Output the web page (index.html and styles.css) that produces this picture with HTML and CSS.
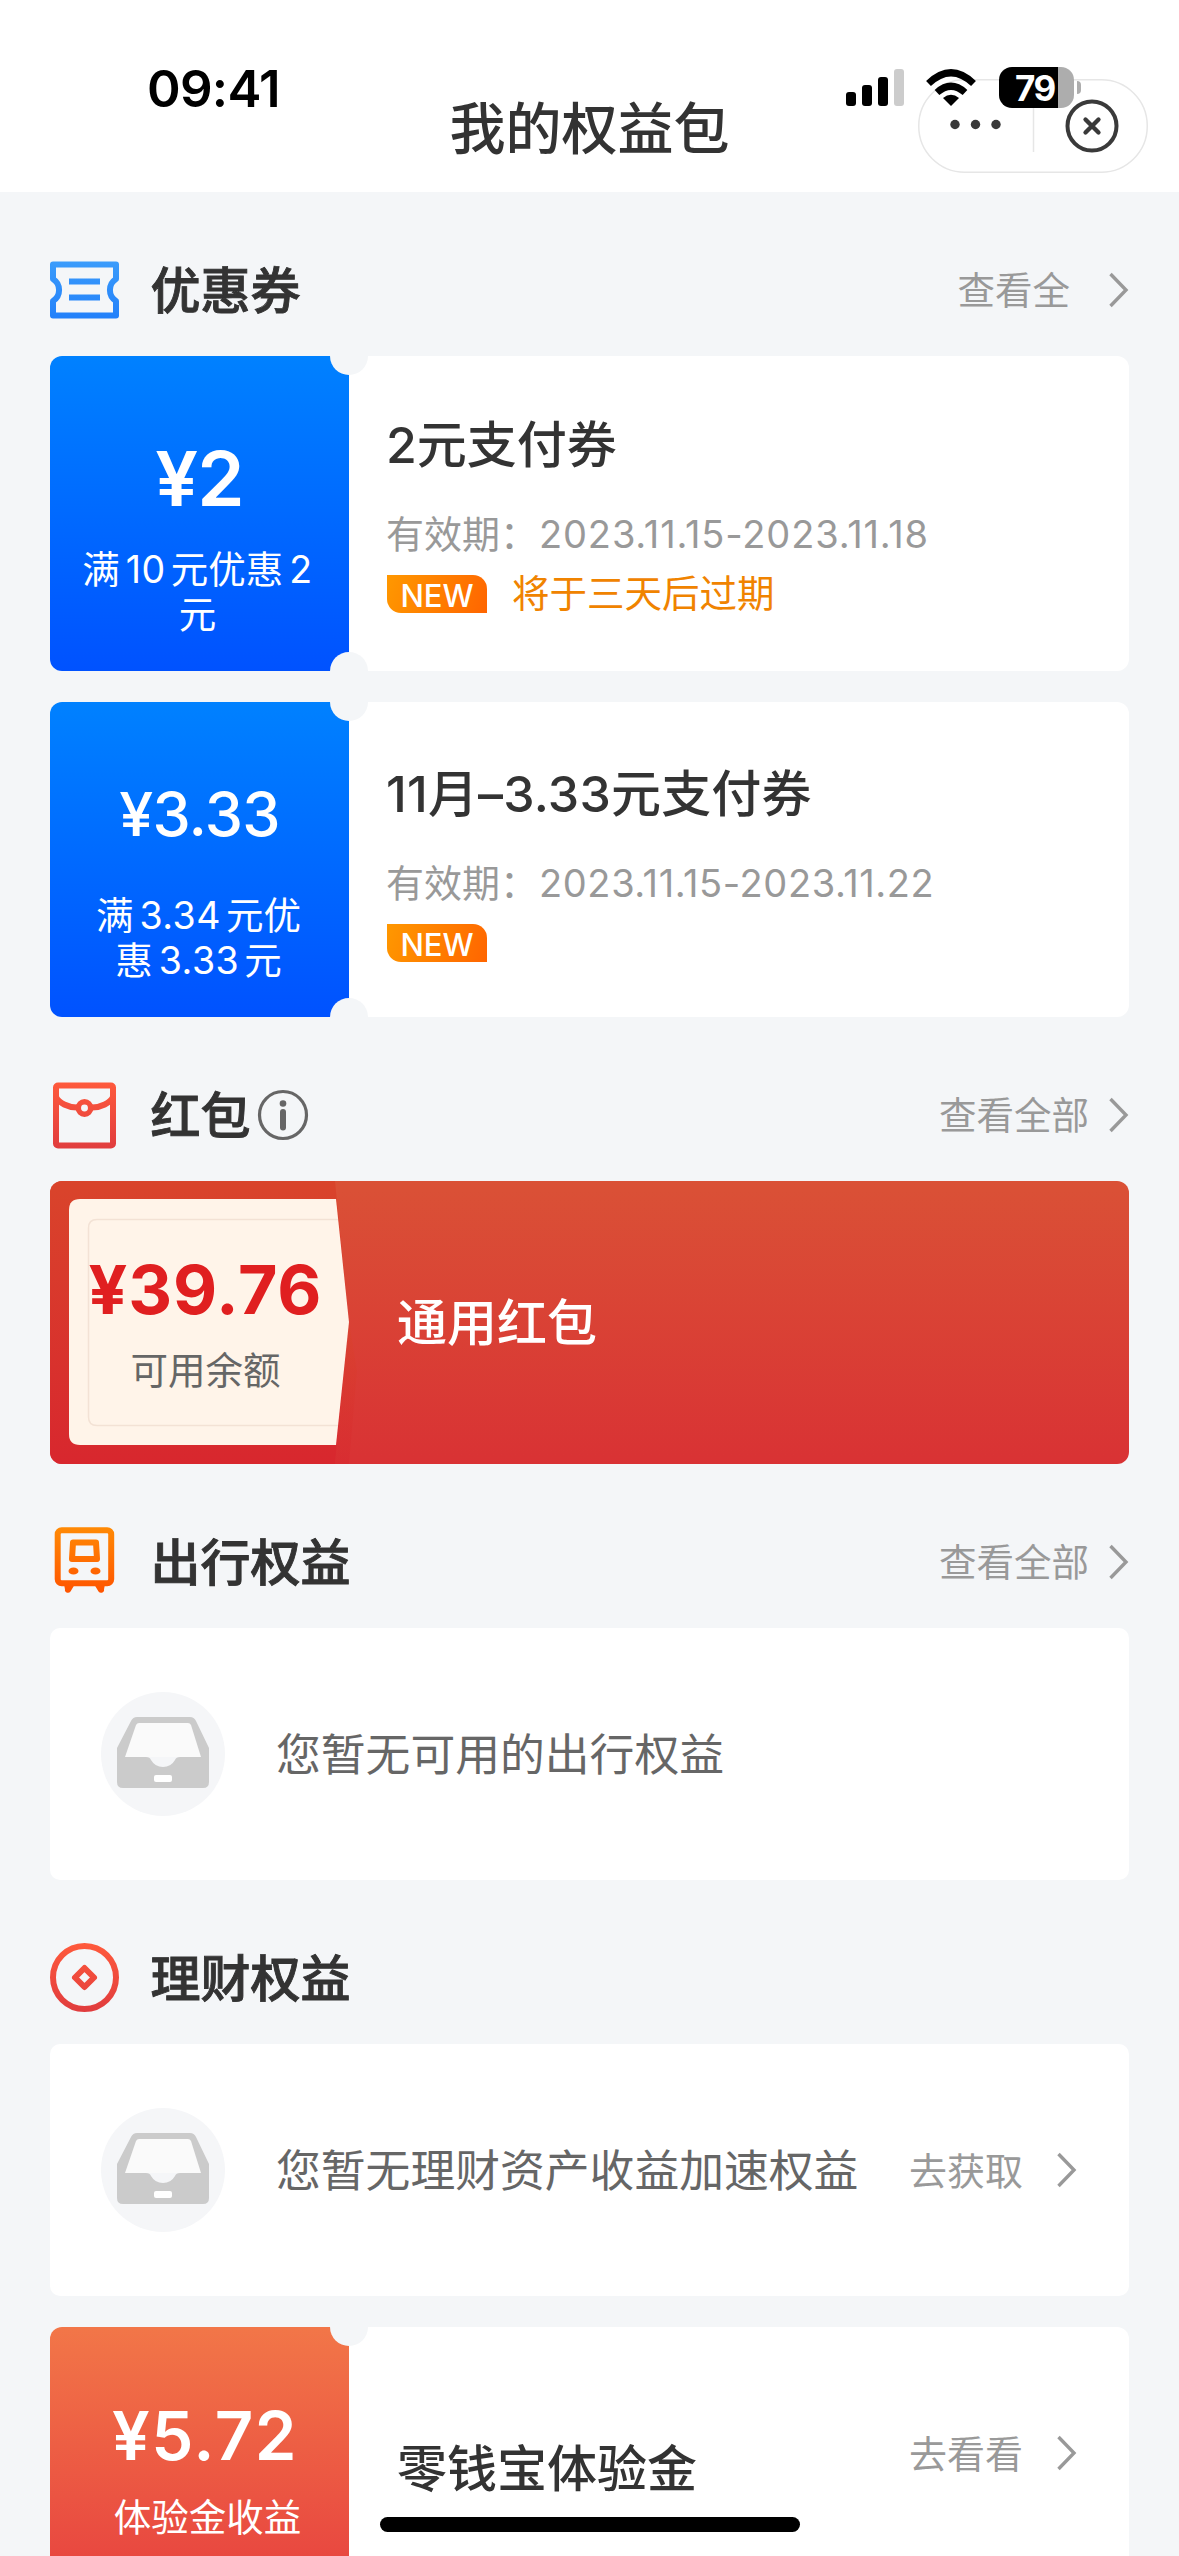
FILE: index.html
```html
<!DOCTYPE html>
<html lang="zh-CN">
<head>
<meta charset="utf-8">
<title>我的权益包</title>
<link rel="stylesheet" href="styles.css">
</head>
<body>
<svg class="defs" width="0" height="0" aria-hidden="true">
  <defs>
    <linearGradient id="blue" gradientUnits="userSpaceOnUse" x1="0" y1="0" x2="0" y2="58"><stop offset="0" stop-color="#3b9cfb"/><stop offset="1" stop-color="#2280fa"/></linearGradient>
    <linearGradient id="red" gradientUnits="userSpaceOnUse" x1="0" y1="0" x2="0" y2="69"><stop offset="0" stop-color="#ff5a3c"/><stop offset="1" stop-color="#e03c3e"/></linearGradient>
    <linearGradient id="orange" gradientUnits="userSpaceOnUse" x1="0" y1="0" x2="0" y2="66"><stop offset="0" stop-color="#ff8a05"/><stop offset="1" stop-color="#ff5400"/></linearGradient>
    <linearGradient id="pack" x1="0" y1="0" x2="0" y2="1"><stop offset="0" stop-color="#d9442b"/><stop offset="1" stop-color="#d8272e"/></linearGradient>
    <symbol id="tray" viewBox="0 0 126 126">
      <circle cx="63" cy="63" r="62" fill="#f5f6f8"/>
      <path d="M35 29H91L106 66H20Z" fill="#fafafa"/>
      <path d="M37 26H90Q94 26 96 30L109 57V91Q109 97 103 97H23Q17 97 17 91V57L31 30Q33 26 37 26ZM39 32Q37 32 36 34L25 66H46Q50 66 51 69Q55 76 63 76Q71 76 75 69Q76 66 80 66H101L91 34Q90 32 88 32Z" fill="#cbcbcb"/>
      <rect x="54" y="84" width="18" height="7" rx="2" fill="#fff"/>
    </symbol>
    <symbol id="chev" viewBox="0 0 20 36"><path d="M1.500 2L17 18L1.500 34" fill="none" stroke="#999" stroke-width="3.400"/></symbol>
  </defs>
</svg>
<div class="screen">
  <header class="topbar">
    <div class="time">09:41</div>
    <h1 class="page-title">我的权益包</h1>
    <div class="capsule">
      <svg width="230" height="94" viewBox="0 0 230 94">
        <rect x=".75" y=".75" width="228.5" height="92.5" rx="46" fill="#fff" stroke="#e6e6e6" stroke-width="1.5"/>
        <path d="M115.500 18V73" stroke="#e6e6e6" stroke-width="1.500"/>
        <g fill="#3a3a3a"><circle cx="37" cy="45.500" r="4.700"/><circle cx="57.500" cy="45.500" r="4.700"/><circle cx="78" cy="45.500" r="4.700"/></g>
        <circle cx="174" cy="47" r="24.500" fill="none" stroke="#3a3a3a" stroke-width="4"/>
        <path d="M167.500 40.500L180.500 53.500M180.500 40.500L167.500 53.500" stroke="#3a3a3a" stroke-width="4.300" stroke-linecap="round"/>
      </svg>
    </div>
    <div class="status">
      <svg class="signal" width="58" height="38" viewBox="0 0 58 38">
        <rect x="0" y="23" width="10" height="14" rx="3"/><rect x="16" y="16" width="10" height="21" rx="3"/><rect x="32" y="8" width="10" height="29" rx="3"/><rect x="48" y="0" width="10" height="37" rx="3" fill="#ccc"/>
      </svg>
      <svg class="wifi" width="50" height="38" viewBox="0 0 50 38">
        <path d="M25 37L17 29Q25 22.500 33 29Z"/>
        <path d="M11 23.500Q25 11 39 23.500" fill="none" stroke="#000" stroke-width="7"/>
        <path d="M2.500 14.500Q25 -7 47.500 14.500" fill="none" stroke="#000" stroke-width="7"/>
      </svg>
      <div class="battery"><span>79</span></div>
      <div class="battery-cap"></div>
    </div>
  </header>

  <main class="content">
    <section>
      <div class="head">
        <svg class="icon" width="69" height="58" viewBox="0 0 69 58" fill="none" stroke="url(#blue)">
          <path d="M3 3.500H66V18A13 13 0 0 0 66 40V54.500H3V40A13 13 0 0 0 3 18Z" stroke-width="6" stroke-linejoin="round"/>
          <path d="M19 17.500H50V23.500H19ZM19 33.500H50V39.500H19Z" fill="url(#blue)" stroke="none"/>
        </svg>
        <h2>优惠券</h2>
        <a class="more clipped">查看全</a><svg class="chev" width="20" height="36"><use href="#chev"/></svg>
      </div>
      <div class="coupons">
        <article class="coupon">
          <div class="stub blue">
            <div class="amount xl">¥2</div>
            <p class="rule first">满<span class="num">10</span>元优惠<span class="num last">2</span><br>元</p>
          </div>
          <div class="info">
            <h3>2元支付券</h3>
            <p class="valid">有效期：<span class="date">2023.11.15-2023.11.18</span></p>
            <div class="tags"><span class="new">NEW</span><span class="expire">将于三天后过期</span></div>
          </div>
        </article>
        <article class="coupon">
          <div class="stub blue">
            <div class="amount">¥3.33</div>
            <p class="rule">满<span class="num">3.34</span>元优<br>惠<span class="num">3.33</span>元</p>
          </div>
          <div class="info second">
            <h3>11月–3.33元支付券</h3>
            <p class="valid">有效期：<span class="date">2023.11.15-2023.11.22</span></p>
            <div class="tags"><span class="new">NEW</span></div>
          </div>
        </article>
      </div>
    </section>

    <section>
      <div class="head">
        <svg class="icon" width="69" height="69" viewBox="0 0 69 69" fill="none" stroke="url(#red)" stroke-width="6">
          <rect x="6" y="4.500" width="57" height="60" rx="2"/>
          <path d="M6 16C9 22 18 26.500 27 26.500M42 26.500C51 26.500 60 22 63 16" stroke-width="6"/>
          <circle cx="34.500" cy="27" r="6.200" stroke-width="5.500"/>
        </svg>
        <h2>红包</h2>
        <svg class="help" width="52" height="52" viewBox="0 0 52 52"><circle cx="26" cy="26" r="23.500" fill="none" stroke="#666" stroke-width="3.200"/><circle cx="26" cy="14.500" r="3.300" fill="#666"/><path d="M26 23V38.500" stroke="#666" stroke-width="6" stroke-linecap="round"/></svg>
        <a class="more">查看全部</a><svg class="chev" width="20" height="36"><use href="#chev"/></svg>
      </div>
      <article class="redpack">
        <svg class="redpack-bg" width="320" height="283" viewBox="0 0 320 283">
          <path d="M0 0H285L299 141L285 283H0Z" fill="url(#pack)"/>
          <path d="M299 141L307 190L299 283H285Z" fill="url(#pack)" opacity=".45"/>
          <path d="M30 18H286L299 141L286 264H30Q19 264 19 253V29Q19 18 30 18Z" fill="#fff4e9"/>
          <path d="M288 38.500H47Q38.500 38.500 38.500 47V236Q38.500 244.500 47 244.500H288" fill="none" stroke="#f3e2d5" stroke-width="1.500"/>
        </svg>
        <div class="balance"><div class="sum">¥39.76</div><p>可用余额</p></div>
        <h3>通用红包</h3>
      </article>
    </section>

    <section>
      <div class="head">
        <svg class="icon train" width="69" height="66" viewBox="0 0 69 66" fill="none" stroke="url(#orange)" stroke-width="6">
          <rect x="7.700" y="3.300" width="53.500" height="53" rx="4"/>
          <path d="M23 15.500H46L47 32H22Z" stroke-linejoin="round"/>
          <g fill="url(#orange)" stroke="none">
            <ellipse cx="23.500" cy="44" rx="5" ry="3.600"/><ellipse cx="45.500" cy="44" rx="5" ry="3.600"/>
            <path d="M14 57H25L20.500 64.500Q19 66.500 16.500 65.500Q14.500 64.500 15 62.500ZM55 57H44L48.500 64.500Q50 66.500 52.500 65.500Q54.500 64.500 54 62.500Z"/>
          </g>
        </svg>
        <h2>出行权益</h2>
        <a class="more">查看全部</a><svg class="chev" width="20" height="36"><use href="#chev"/></svg>
      </div>
      <article class="empty">
        <svg width="126" height="126"><use href="#tray"/></svg>
        <p>您暂无可用的出行权益</p>
      </article>
    </section>

    <section>
      <div class="head">
        <svg class="icon coin" width="69" height="69" viewBox="0 0 69 69" fill="none" stroke="url(#red)">
          <circle cx="34.500" cy="34.500" r="31.500" stroke-width="6"/>
          <path d="M34.500 25L44 34.500L34.500 44L25 34.500Z" stroke-width="6" stroke-linejoin="round"/>
        </svg>
        <h2>理财权益</h2>
      </div>
      <article class="empty">
        <svg width="126" height="126"><use href="#tray"/></svg>
        <p>您暂无理财资产收益加速权益</p>
        <a class="go">去获取</a><svg class="chev" width="20" height="36"><use href="#chev"/></svg>
      </article>
      <article class="coupon trial">
        <div class="stub coral">
          <div class="amount lg">¥5.72</div>
          <p class="rule">体验金收益</p>
        </div>
        <div class="info">
          <h3>零钱宝体验金</h3>
          <a class="go">去看看</a><svg class="chev" width="20" height="36"><use href="#chev"/></svg>
        </div>
      </article>
    </section>
  </main>
  <div class="home-bar"></div>
</div>
</body>
</html>
```
FILE: styles.css
```css
* { box-sizing: border-box; margin: 0; padding: 0; }
body {
  background: #f4f6f8;
  font-family: Inter, "Noto Sans CJK SC", sans-serif;
  color: #333;
}
svg { display: block; flex: none; }
.defs { position: absolute; }
.screen { position: relative; width: 1179px; height: 2556px; overflow: hidden; }

/* top bar */
.topbar { position: relative; height: 192px; background: #fff; text-align: center; padding-top: 92px; }
.page-title { font-size: 56px; font-weight: 500; line-height: 74px; }
.time { position: absolute; left: 147px; top: 57px; font-size: 51px; font-weight: 600; line-height: 64px; color: #000; letter-spacing: -.7px; }
.capsule { position: absolute; left: 918px; top: 79px; }
.status { position: absolute; left: 846px; top: 67px; display: flex; align-items: center; height: 41px; }
.wifi { margin-left: 22px; }
.battery {
  margin-left: 23px; width: 75px; height: 41px; border-radius: 13px;
  background: linear-gradient(90deg, #000 59px, #adadad 59px);
  color: #fff; font-size: 35px; font-weight: 700; line-height: 42px; text-align: left; padding-left: 16px; letter-spacing: -1.5px;
}
.battery-cap { margin-left: 3px; width: 4px; height: 13px; border-radius: 0 4px 4px 0; background: #adadad; }

/* section heads */
.content { padding: 0 50px; }
.head { height: 164px; padding-top: 32px; display: flex; align-items: center; }
.head h2 { font-size: 50px; font-weight: 500; line-height: 60px; margin-left: 31.5px; padding-top: 2px; -webkit-text-stroke: .9px #333; }
.icon.train { margin-top: -4px; }
.icon.coin { margin-top: -2px; }
.help { margin-left: 6.5px; margin-top: -1px; }
.more { margin-left: auto; font-size: 37.5px; line-height: 50px; padding-top: 2px; color: #999; }
.more + .chev { margin-left: 20px; }
.more.clipped + .chev { margin-left: 39px; }

/* coupons */
.coupons { display: grid; gap: 31px; }
.coupon { position: relative; display: flex; height: 315px; border-radius: 12px; background: #fff; overflow: hidden; }
.coupon::before, .coupon::after {
  content: ""; position: absolute; left: 280px; width: 38px; height: 38px; border-radius: 50%; background: #f4f6f8;
}
.coupon::before { top: -19px; }
.coupon::after { bottom: -19px; }
.stub { width: 299px; color: #fff; text-align: center; flex: none; }
.blue { background: linear-gradient(#0081ff, #0052ff); }
.coral { background: linear-gradient(#f27648, #e5373d); }
.amount { font-size: 61px; font-weight: 500; line-height: 80px; padding-top: 72px; height: 191px; letter-spacing: -.8px; }
.amount.xl { font-size: 76px; padding-top: 82px; font-weight: 600; }
.amount.lg { font-size: 67px; font-weight: 600; padding: 69px 0 0 11px; height: 168px; letter-spacing: 1.5px; }
.rule { font-size: 37.5px; line-height: 45px; padding-right: 2px; }
.rule.first { padding-right: 4px; }
.coral .rule { padding: 0 0 0 16px; }
.num { margin: 0 5px 0 6px; letter-spacing: .5px; }
.num.last { margin-right: 0; }
.info { flex: 1; padding: 57px 0 0 37px; }
.info.second { padding-top: 60px; }
.info h3, .redpack h3 { font-size: 50px; font-weight: 500; line-height: 64px; }
.info h3 { margin-bottom: 32px; }
.info.second h3 { letter-spacing: .2px; }
.valid { font-size: 38px; line-height: 50px; color: #999; }
.date { letter-spacing: .85px; margin-left: 1px; }
.second .date { letter-spacing: .6px; }
.tags { display: flex; align-items: center; margin-top: 13px; height: 44px; padding-left: 1px; }
.new {
  width: 100px; height: 38px; border-radius: 0 14px 0 14px; text-align: center;
  background: linear-gradient(110deg, #ff9800, #ff6500); color: #fff; font-size: 31px; font-weight: 500; line-height: 41px;
}
.expire { margin-left: 25px; font-size: 37.5px; color: #f08300; line-height: 44px; }

/* red packet */
.redpack { position: relative; display: flex; align-items: center; height: 283px; border-radius: 12px; overflow: hidden; background: linear-gradient(#da5136, #d93234); }
.redpack-bg { margin-right: -320px; }
.balance { position: relative; width: 347px; padding-right: 36px; text-align: center; }
.sum { font-size: 68px; font-weight: 700; color: #e01f20; line-height: 80px; letter-spacing: .9px; }
.balance p { font-size: 37.5px; line-height: 50px; color: #666; margin-top: 17px; }
.redpack h3 { color: #fff; }

/* empty states */
.empty { display: flex; align-items: center; height: 252px; padding: 0 52px 0 50px; background: #fff; border-radius: 10px; }
.empty p { margin-left: 50px; font-size: 44.8px; line-height: 60px; padding-top: 1px; color: #666; }
.go { margin-left: auto; font-size: 38px; line-height: 50px; padding-top: 2px; color: #999; }
.go + .chev { margin-left: 34px; }

.trial { margin-top: 31px; }
.trial .info { display: flex; align-items: center; padding: 0 52px 0 48px; height: 252px; }
.trial .info h3 { margin: 32px 0 0; }

.home-bar { position: absolute; left: 380px; top: 2517px; width: 420px; height: 15px; border-radius: 8px; background: #000; }
```
